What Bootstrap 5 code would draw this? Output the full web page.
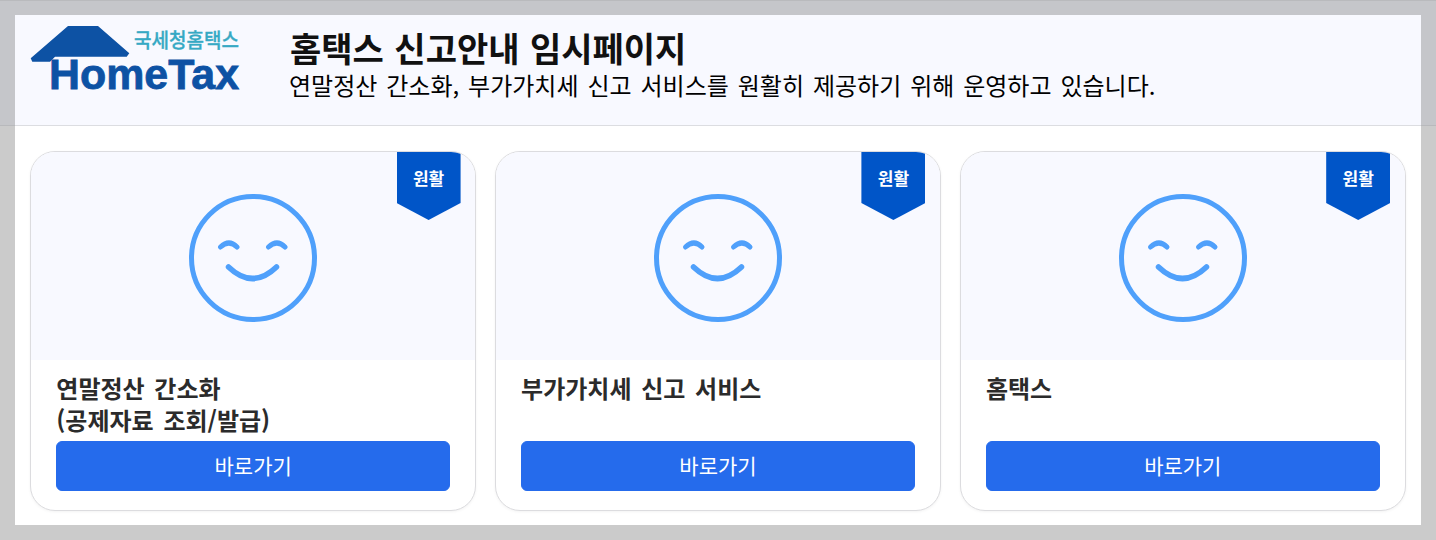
<!DOCTYPE html>
<html lang="ko">
<head>
<meta charset="utf-8">
<title>홈택스 신고안내 임시페이지</title>
<link rel="stylesheet" href="https://cdn.jsdelivr.net/npm/bootstrap@5.3.0/dist/css/bootstrap.min.css">
<style>
html,body{height:540px;overflow:hidden}
body{background:#cbcbcb;font-family:"Noto Sans CJK KR","Liberation Sans",sans-serif;color:#000}
.top-strip{background:#c5c6ca;border-top:1px solid #b9babd;border-bottom:1px solid #b8b9bc;height:126px;padding:14px 15px 0}
.head-inner{background:#f8f9ff;height:111px;padding:5px 0 0 15px;border-bottom:1px solid #dcdde1}
.logo-box{width:216px;height:80px;flex:none}
.logo-sub{font:500 20px "Noto Sans CJK KR",sans-serif;fill:#36a9c4;stroke:#36a9c4;stroke-width:.3px}
.logo-main{font:700 43px "Liberation Sans",sans-serif;fill:#0d52a4;stroke:#0d52a4;stroke-width:.8px}
.head-text{margin-left:43px;padding-top:6px}
.head-title{font-size:34px;font-weight:700;line-height:44px;margin:0 0 0 1px;color:#111;word-spacing:1px}
.head-sub{font-size:24px;line-height:30px;margin:0;color:#000;word-spacing:2.2px}
.body-area{background:#fff;height:399px;margin:0 15px;padding:25px 15.3px 14px;gap:19px}
.svc-card{flex:1 1 0;min-width:0;height:360px;border:1px solid #dcdcdf;border-radius:25px;overflow:hidden;box-shadow:0 1px 3px rgba(0,0,0,.05);background:#fff}
.svc-visual{height:208px;background:#f8f9ff;position:relative;padding-top:4px}
.svc-ribbon{position:absolute;top:0;right:14.5px;width:64px;height:68px;background:#0055c8;clip-path:polygon(0 0,100% 0,100% 75%,50% 100%,0 75%);color:#fff;text-align:center;font-weight:700;font-size:17px;line-height:52px}
.svc-body{padding:12px 25px 19px;height:150px}
.svc-title{font-size:24px;font-weight:700;line-height:32px;height:64px;margin:0 0 5px;color:#2b2b2b;white-space:pre-line;word-spacing:3px}
.svc-btn{--bs-btn-bg:#256bec;--bs-btn-border-color:#256bec;--bs-btn-hover-bg:#256bec;--bs-btn-hover-border-color:#256bec;height:50px;font-size:21px;line-height:34px;border-radius:6px;width:100%}
</style>
</head>
<body>
<div class="top-strip">
  <div class="head-inner d-flex">
    <svg class="logo-box" viewBox="0 -6 216 80" role="img" aria-label="국세청홈택스 HomeTax">
      <path d="M.7 32.300 L38 0 H68 L99.300 27.300 L96.700 30.700 H25 L20 35.700 H2.300 Z" fill="#0d52a4"/>
      <text class="logo-sub" x="104" y="22" textLength="105" lengthAdjust="spacingAndGlyphs">국세청홈택스</text>
      <text class="logo-main" x="19" y="63" textLength="190" lengthAdjust="spacingAndGlyphs">HomeTax</text>
    </svg>
    <div class="head-text">
      <h1 class="head-title">홈택스 신고안내 임시페이지</h1>
      <p class="head-sub">연말정산 간소화, 부가가치세 신고 서비스를 원활히 제공하기 위해 운영하고 있습니다.</p>
    </div>
  </div>
</div>
<main class="body-area d-flex">
  <div class="svc-card">
    <div class="svc-visual d-flex justify-content-center align-items-center">
      <span class="svc-ribbon">원활</span>
      <svg width="128" height="128" viewBox="0 0 128 128" fill="none" stroke="#4fa0fb" stroke-linecap="round"><circle cx="64" cy="64" r="61.500" stroke-width="5"/><path d="M31.500 53 Q40 45 48 53M79.500 53 Q88 45 96 53" stroke-width="5"/><path d="M39.500 73 Q63.500 96 87.500 73" stroke-width="5.500"/></svg>
    </div>
    <div class="svc-body">
      <h2 class="svc-title">연말정산 간소화
(공제자료 조회/발급)</h2>
      <a class="btn btn-primary svc-btn" href="#">바로가기</a>
    </div>
  </div>
  <div class="svc-card">
    <div class="svc-visual d-flex justify-content-center align-items-center">
      <span class="svc-ribbon">원활</span>
      <svg width="128" height="128" viewBox="0 0 128 128" fill="none" stroke="#4fa0fb" stroke-linecap="round"><circle cx="64" cy="64" r="61.500" stroke-width="5"/><path d="M31.500 53 Q40 45 48 53M79.500 53 Q88 45 96 53" stroke-width="5"/><path d="M39.500 73 Q63.500 96 87.500 73" stroke-width="5.500"/></svg>
    </div>
    <div class="svc-body">
      <h2 class="svc-title">부가가치세 신고 서비스</h2>
      <a class="btn btn-primary svc-btn" href="#">바로가기</a>
    </div>
  </div>
  <div class="svc-card">
    <div class="svc-visual d-flex justify-content-center align-items-center">
      <span class="svc-ribbon">원활</span>
      <svg width="128" height="128" viewBox="0 0 128 128" fill="none" stroke="#4fa0fb" stroke-linecap="round"><circle cx="64" cy="64" r="61.500" stroke-width="5"/><path d="M31.500 53 Q40 45 48 53M79.500 53 Q88 45 96 53" stroke-width="5"/><path d="M39.500 73 Q63.500 96 87.500 73" stroke-width="5.500"/></svg>
    </div>
    <div class="svc-body">
      <h2 class="svc-title">홈택스</h2>
      <a class="btn btn-primary svc-btn" href="#">바로가기</a>
    </div>
  </div>
</main>
<script src="https://cdn.jsdelivr.net/npm/bootstrap@5.3.0/dist/js/bootstrap.bundle.min.js"></script>
</body>
</html>
